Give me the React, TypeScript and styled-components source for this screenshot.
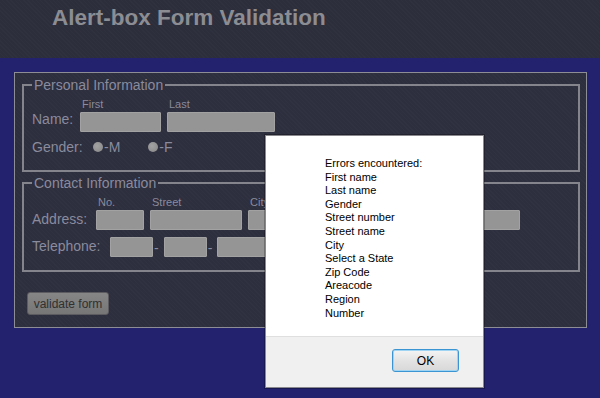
import React from 'react';
import styled, { createGlobalStyle } from 'styled-components';

const GlobalStyle = createGlobalStyle`
  html, body {
    margin: 0;
    padding: 0;
    background: #22226e;
    overflow: hidden;
  }
  * {
    box-sizing: border-box;
  }
`;

const LABEL = '#8a8b9c';

const Page = styled.div`
  position: relative;
  width: 600px;
  height: 398px;
  font-family: 'Liberation Sans', Arial, sans-serif;
  background: #22226e;
`;

const Header = styled.header`
  height: 58px;
  padding: 7px 0 0 52px;
  background-color: #2d2e3c;
  background-image: repeating-linear-gradient(45deg, rgba(255,255,255,0.015) 0 1px, transparent 1px 3px);
`;

const Title = styled.h1`
  margin: 0;
  font-size: 22.5px;
  line-height: 22.5px;
  font-weight: bold;
  color: #8c8d92;
`;

const Body = styled.main`
  padding: 14px 13px 0 14px;
`;

const Panel = styled.form`
  width: 573px;
  padding: 4px 6px 12px 7px;
  border: 1px solid #8d8d96;
  background-color: #2d2e3e;
  background-image: repeating-linear-gradient(45deg, rgba(255,255,255,0.015) 0 1px, transparent 1px 3px);
`;

const Group = styled.fieldset<{ $gapTop?: number }>`
  margin: ${p => p.$gapTop || 0}px 0 0 0;
  padding: 5px 8px 13px 8px;
  min-width: 0;
  border: 2px solid #83848c;
`;

const Legend = styled.legend`
  padding: 0 2px;
  font-size: 14px;
  line-height: 16px;
  color: ${LABEL};
`;

const Row = styled.div<{ $gap?: number; $top?: number }>`
  display: flex;
  align-items: flex-end;
  gap: ${p => p.$gap ?? 6}px;
  margin-top: ${p => p.$top || 0}px;
`;

const Label = styled.span<{ $w: number; $lift?: number }>`
  width: ${p => p.$w}px;
  flex: none;
  font-size: 14px;
  line-height: 16px;
  margin-bottom: ${p => p.$lift ?? 3}px;
  color: ${LABEL};
`;

const Field = styled.label`
  display: flex;
  flex-direction: column;
`;

const Caption = styled.span`
  padding-left: 2px;
  margin-bottom: 2px;
  min-height: 12px;
  font-size: 11px;
  line-height: 12px;
  color: ${LABEL};
`;

const Input = styled.span<{ $w: number }>`
  display: block;
  width: ${p => p.$w}px;
  height: 20px;
  background: #959595;
  border: 1px solid #a2a2a2;
  border-radius: 1px;
`;

const Dash = styled.span`
  font-size: 14px;
  line-height: 16px;
  color: ${LABEL};
  margin: 0 5px 1px 1px;
`;

const Option = styled.span`
  display: flex;
  align-items: center;
  font-size: 14px;
  line-height: 20px;
  color: ${LABEL};
  & + & {
    margin-left: 28px;
  }
`;

const Radio = styled.span`
  width: 10px;
  height: 10px;
  margin-right: 1px;
  border-radius: 50%;
  background: radial-gradient(circle at 40% 40%, #a3a3a3, #868686);
`;

const GenderRow = styled.div`
  display: flex;
  align-items: center;
  margin-top: 5px;
  height: 20px;
`;

const GenderLabel = styled.span`
  width: 61px;
  font-size: 14px;
  color: ${LABEL};
`;

const Submit = styled.button`
  display: block;
  margin: 20px 0 0 5px;
  width: 82px;
  height: 23px;
  padding: 0;
  font-family: 'Liberation Sans', Arial, sans-serif;
  font-size: 12px;
  color: #303030;
  background: linear-gradient(#868686, #767676);
  border: 1px solid #5c5c60;
  border-radius: 3px;
`;

const Dialog = styled.div`
  position: absolute;
  left: 265px;
  top: 135px;
  width: 219px;
  height: 253px;
  display: flex;
  flex-direction: column;
  background: #fff;
  border: 1px solid #8a8a8e;
  box-shadow: 0 0 0 1px rgba(0,0,0,0.25);
`;

const Message = styled.div`
  flex: 1;
  padding: 21px 0 0 59px;
  font-size: 11px;
  line-height: 13.6px;
  color: #000;
`;

const Footer = styled.div`
  height: 51px;
  display: flex;
  justify-content: flex-end;
  align-items: flex-start;
  padding: 12px 24px 0 0;
  background: #f0f0f0;
  border-top: 1px solid #dfdfdf;
`;

const OkButton = styled.button`
  width: 67px;
  height: 23px;
  padding: 0;
  font-family: 'Liberation Sans', Arial, sans-serif;
  font-size: 12px;
  color: #000;
  background: linear-gradient(#f4f4f4, #e2e2e2 55%, #d8d8d8);
  border: 1px solid #3b95d2;
  border-radius: 3px;
  box-shadow: inset 0 0 0 1px #9fd4f2;
`;

const errors = [
  'Errors encountered:',
  'First name',
  'Last name',
  'Gender',
  'Street number',
  'Street name',
  'City',
  'Select a State',
  'Zip Code',
  'Areacode',
  'Region',
  'Number',
];

const App = () => {
  return (
    <Page>
      <GlobalStyle />
      <Header>
        <Title>Alert-box Form Validation</Title>
      </Header>
      <Body>
        <Panel onSubmit={e => e.preventDefault()}>
          <Group>
            <Legend>Personal Information</Legend>
            <Row>
              <Label $w={42} $lift={5}>Name:</Label>
              <Field>
                <Caption>First</Caption>
                <Input $w={81} />
              </Field>
              <Field>
                <Caption>Last</Caption>
                <Input $w={108} />
              </Field>
            </Row>
            <GenderRow>
              <GenderLabel>Gender:</GenderLabel>
              <Option><Radio />-M</Option>
              <Option><Radio />-F</Option>
            </GenderRow>
          </Group>
          <Group $gapTop={3}>
            <Legend>Contact Information</Legend>
            <Row $gap={6}>
              <Label $w={58}>Address:</Label>
              <Field>
                <Caption>No.</Caption>
                <Input $w={48} />
              </Field>
              <Field>
                <Caption>Street</Caption>
                <Input $w={92} />
              </Field>
              <Field>
                <Caption>City</Caption>
                <Input $w={92} />
              </Field>
              <Field>
                <Caption />
                <Input $w={110} />
              </Field>
              <Field>
                <Caption>Zip</Caption>
                <Input $w={58} />
              </Field>
            </Row>
            <Row $gap={0} $top={7}>
              <Label $w={78}>Telephone:</Label>
              <Input $w={43} />
              <Dash>-</Dash>
              <Input $w={43} />
              <Dash>-</Dash>
              <Input $w={63} />
            </Row>
          </Group>
          <Submit type="submit">validate form</Submit>
        </Panel>
      </Body>
      <Dialog role="alertdialog">
        <Message>
          {errors.map(line => (
            <div key={line}>{line}</div>
          ))}
        </Message>
        <Footer>
          <OkButton type="button">OK</OkButton>
        </Footer>
      </Dialog>
    </Page>
  );
};

export default App;
